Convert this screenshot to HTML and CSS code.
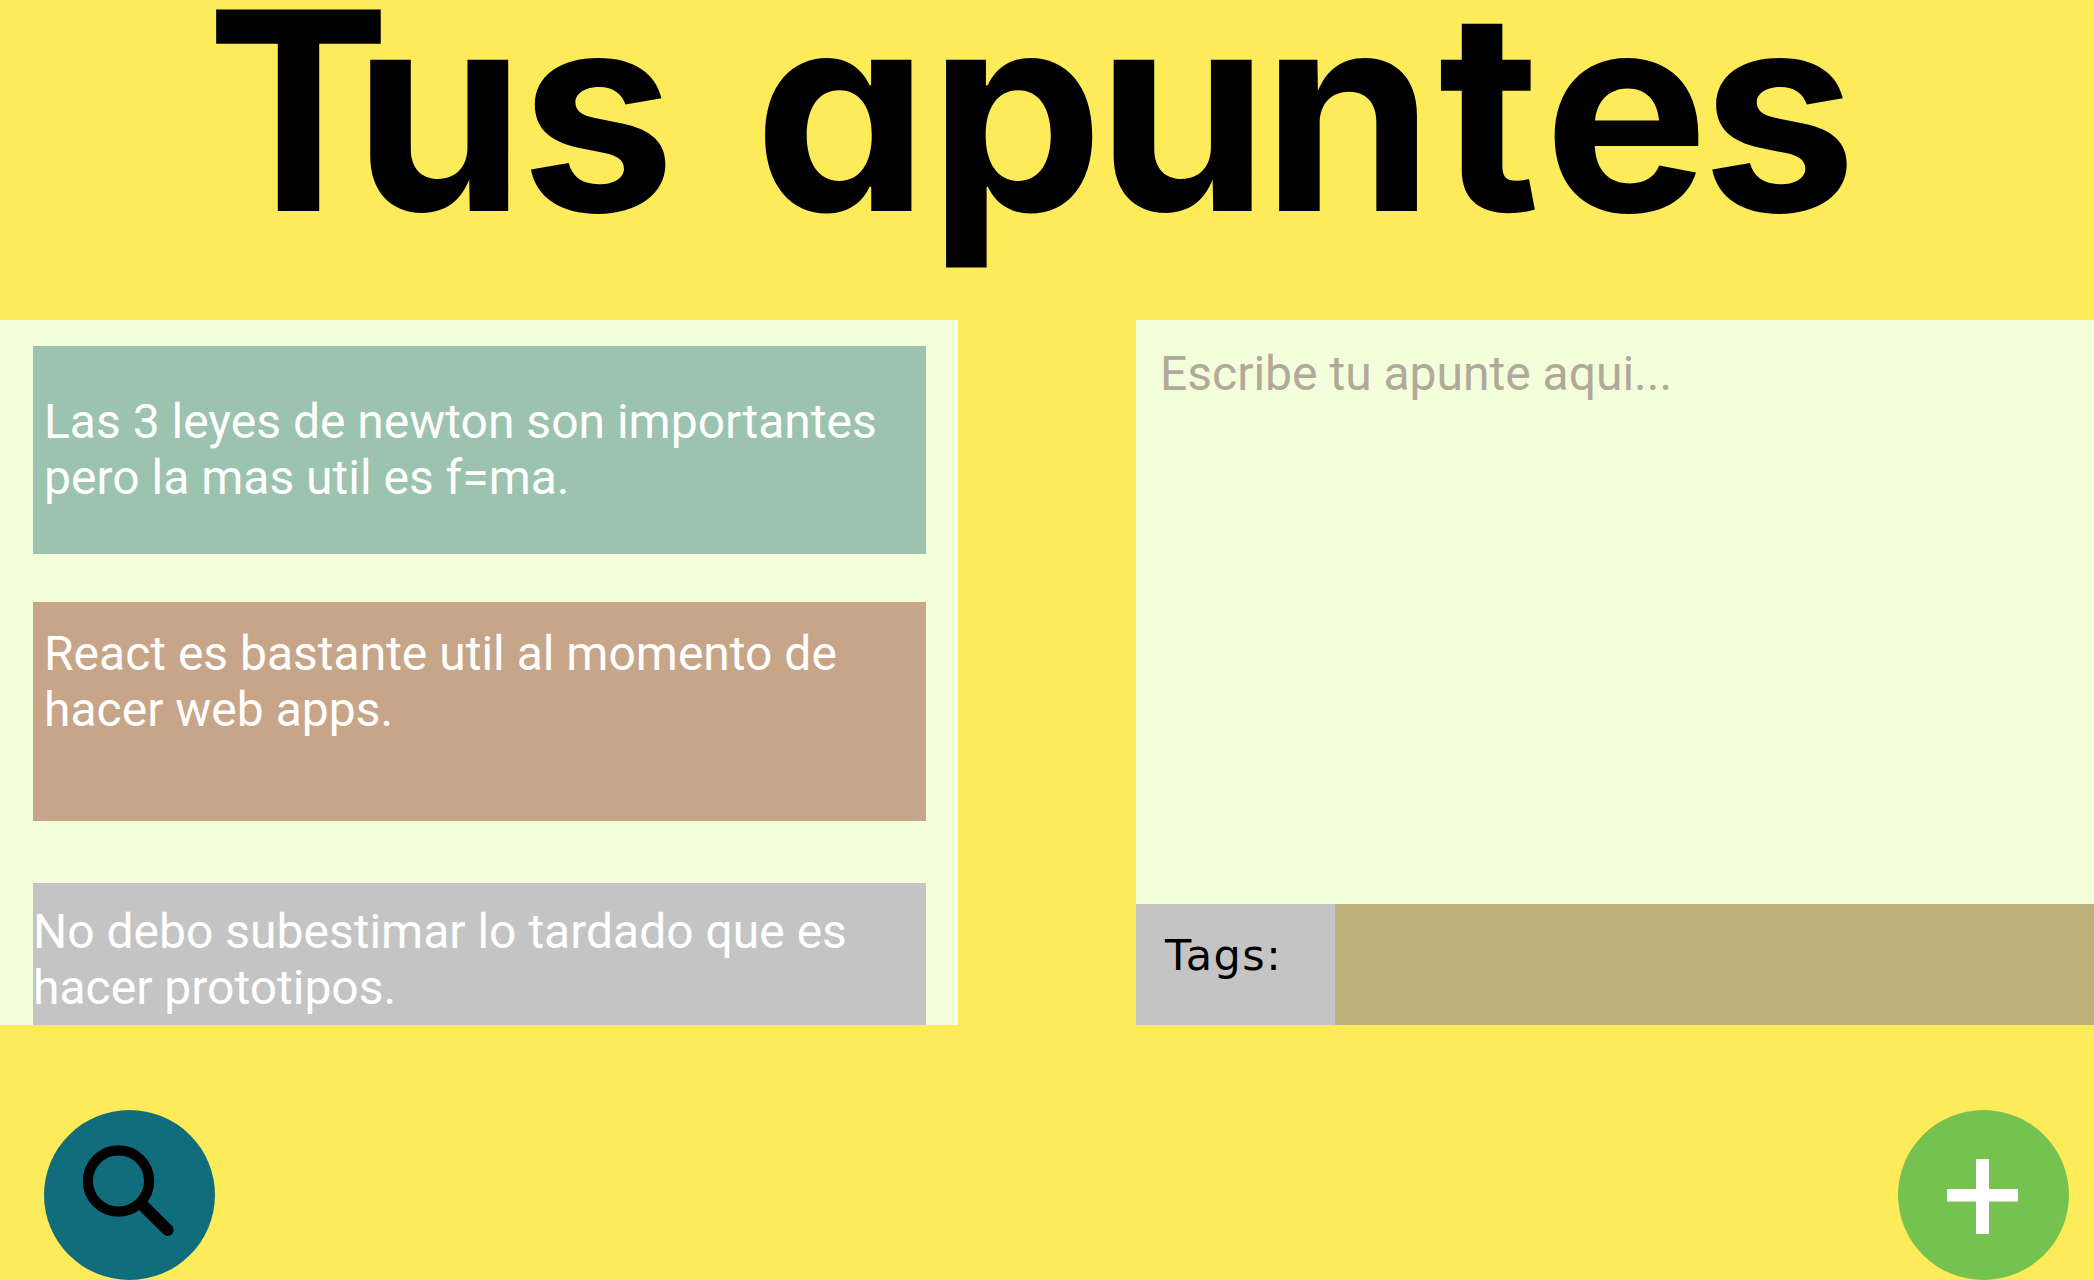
FILE: index.html
```html
<!DOCTYPE html>
<html lang="es">
<head>
<meta charset="utf-8">
<title>Tus apuntes</title>
<link rel="stylesheet" href="styles.css">
</head>
<body>
<div class="page">
  <header class="header">
    <h1 class="title"><span class="kern-cap">T</span><span class="kern-snug">u</span>s<span class="kern-space"> </span>a<span class="kern-tight">pu</span><span class="kern-loose">nt</span><span class="kern-tight">e</span>s</h1>
  </header>
  <main class="panels">
    <section class="notes">
      <article class="note note-green">Las 3 leyes de newton son importantes<br>pero la mas util es f=ma.</article>
      <article class="note note-tan">React es bastante util al momento de<br>hacer web apps.</article>
      <article class="note note-gray">No debo subestimar lo tardado que es<br>hacer prototipos.</article>
    </section>
    <section class="editor">
      <div class="draft">Escribe tu apunte aqui...</div>
      <div class="tags">
        <div class="tags-label">Tags:</div>
        <div class="tags-field"></div>
      </div>
    </section>
  </main>
  <footer class="actions">
    <button class="action action-search" aria-label="Buscar">
      <svg viewBox="0 0 171 170" width="171" height="170" fill="none" stroke="#000">
        <circle cx="74.5" cy="71" r="30.6" stroke-width="10.2"/>
        <path d="M98 94.5L123.700 120" stroke-width="12" stroke-linecap="round"/>
      </svg>
    </button>
    <button class="action action-add" aria-label="Agregar">
      <svg viewBox="0 0 171 170" width="171" height="170" fill="#fff">
        <path d="M78 49h13v30h29v12.500h-29v32.500h-13v-32.500h-29v-12.500h29z"/>
      </svg>
    </button>
  </footer>
</div>
</body>
</html>
```
FILE: styles.css
```css
* { box-sizing: border-box; }

body {
  margin: 0;
  background: #fdeb59;
  font-family: Roboto, "Liberation Sans", sans-serif;
}

.page {
  display: flex;
  flex-direction: column;
  width: 2094px;
  height: 1280px;
  overflow: hidden;
}

.header {
  flex: none;
  height: 320px;
  padding-left: 206px;
}

.title {
  margin: 0;
  font-family: Inter, "Liberation Sans", sans-serif;
  font-size: 277px;
  font-weight: 700;
  line-height: 222px;
  font-feature-settings: "cv11" 1;
  font-kerning: none;
  white-space: nowrap;
}

.kern-cap { letter-spacing: -38px; }
.kern-snug { letter-spacing: -5px; }
.kern-space { letter-spacing: 13px; }
.kern-tight { letter-spacing: -7px; }
.kern-loose { letter-spacing: 4px; }

.panels {
  flex: none;
  display: grid;
  grid-template-columns: 958px 958px;
  justify-content: space-between;
  height: 705px;
}

.notes {
  padding: 26px 32px 0 33px;
  background: #f3fedb;
}

.note {
  padding-left: 11px;
  color: #fff;
  font-size: 48px;
  line-height: 56px;
  white-space: nowrap;
}

.note-green {
  height: 208px;
  padding-top: 48px;
  background: #9cc2b0;
}

.note-tan {
  height: 219px;
  margin-top: 48px;
  padding-top: 24px;
  background: #c7a589;
}

.note-gray {
  height: 142px;
  margin-top: 62px;
  padding: 21px 0 0;
  background: #c4c4c4;
}

.editor {
  display: flex;
  flex-direction: column;
  background: #f3fedb;
}

.draft {
  flex: 1;
  padding: 26px 24px;
  color: #b1a999;
  font-size: 48px;
  line-height: 56px;
}

.tags {
  display: flex;
  height: 121px;
}

.tags-label {
  width: 199px;
  padding: 23px 0 0 29px;
  background: #c4c4c4;
  color: #000;
  font-family: "DejaVu Sans", sans-serif;
  font-size: 43px;
  line-height: 56px;
  letter-spacing: 1.5px;
}

.tags-field {
  flex: 1;
  background: #bdb17b;
}

.actions {
  display: flex;
  justify-content: space-between;
  padding: 85px 25px 0 44px;
}

.action {
  width: 171px;
  height: 170px;
  padding: 0;
  border: 0;
  border-radius: 50%;
}

.action svg { display: block; }

.action-search { background: #116d7b; }

.action-add { background: #76c250; }
```
